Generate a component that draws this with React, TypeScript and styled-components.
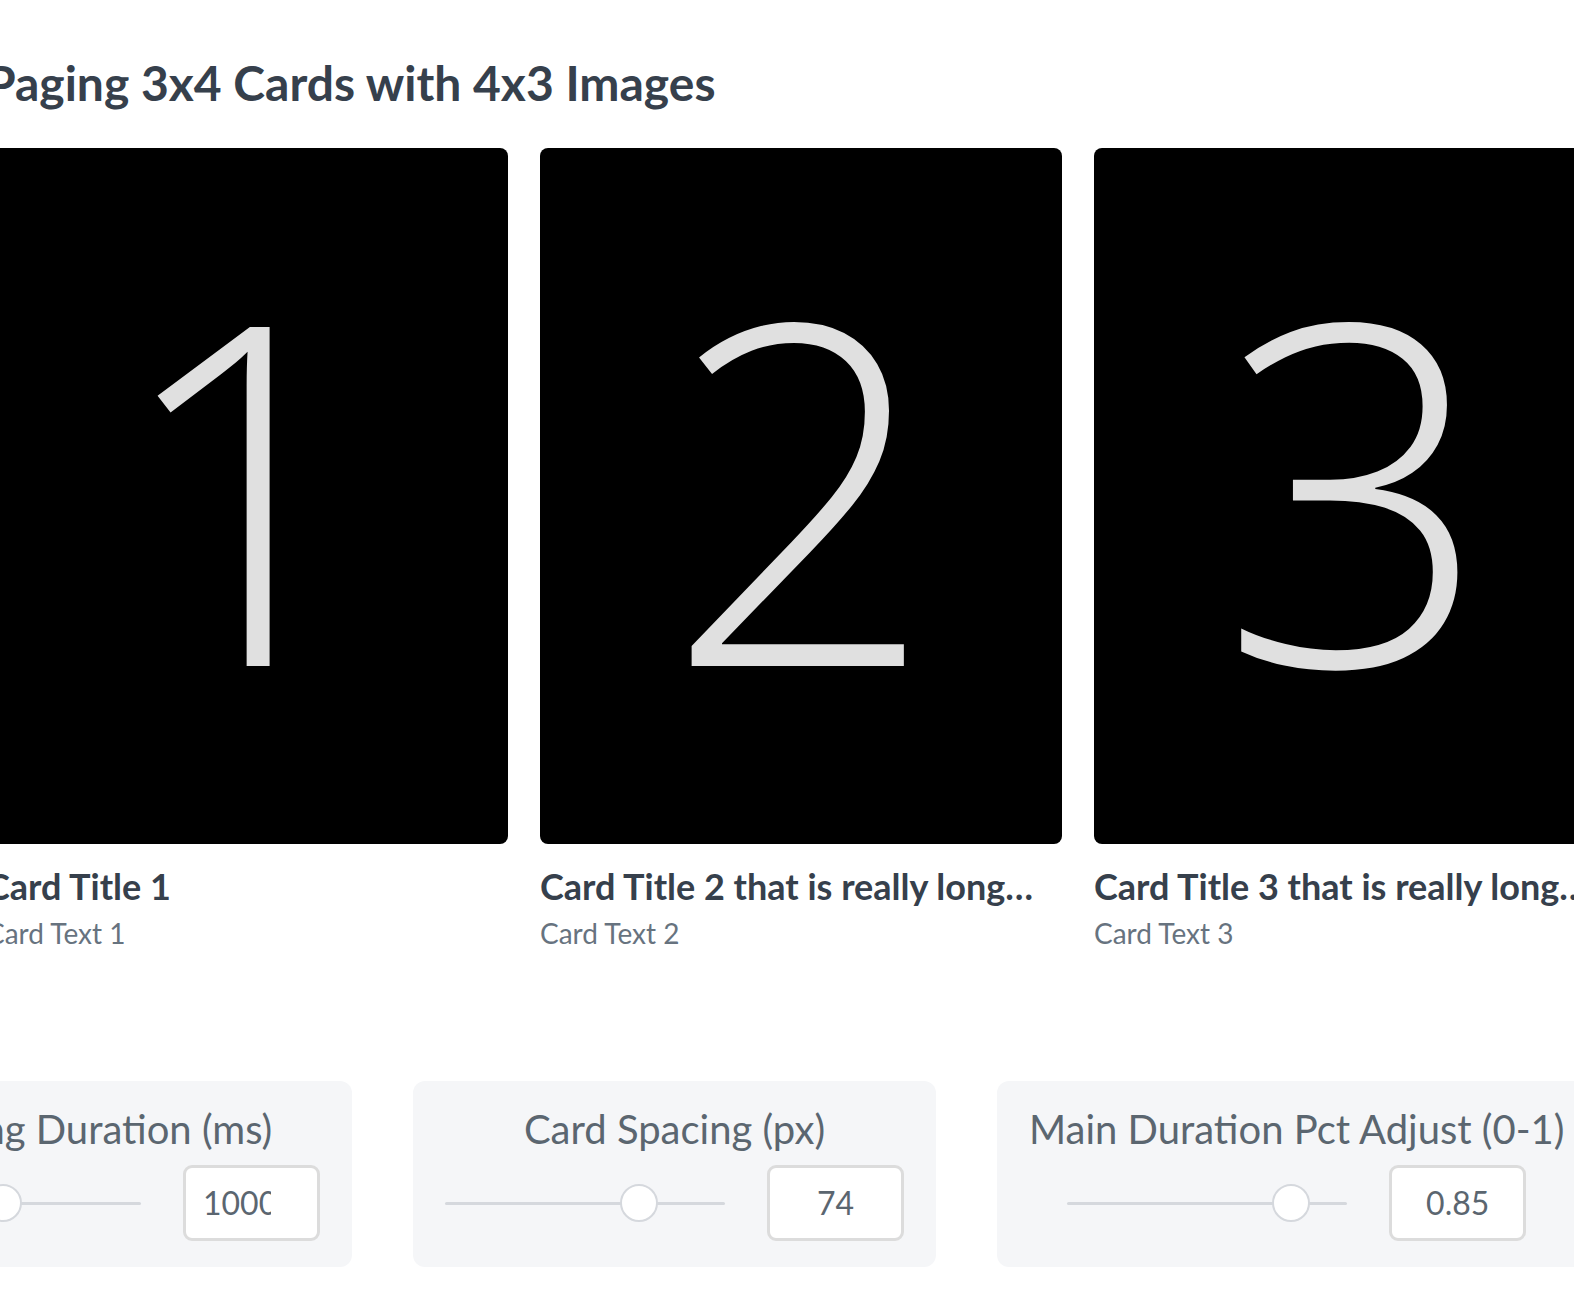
import React from "react";
import styled, { createGlobalStyle } from "styled-components";

const GlobalStyle = createGlobalStyle`
  html, body {
    margin: 0;
    padding: 0;
    background: #ffffff;
    overflow: hidden;
  }
  body {
    font-family: Lato, "Liberation Sans", sans-serif;
  }
`;

const Page = styled.div`
  width: 1574px;
  height: 1290px;
  overflow: hidden;
`;

const Inner = styled.div`
  margin-left: -14px;
  padding-top: 54px;
`;

const Heading = styled.h1`
  margin: 0;
  font-family: Lato, "Liberation Sans", sans-serif;
  font-weight: 700;
  font-size: 48px;
  line-height: 58px;
  color: #36404c;
  white-space: nowrap;
`;

const CardRow = styled.div`
  display: flex;
  gap: 32px;
  margin-top: 36px;
`;

const Card = styled.div`
  flex: 0 0 522px;
  width: 522px;
  min-width: 0;
`;

const CardImage = styled.div`
  height: 696px;
  background: #000000;
  border-radius: 8px;
  display: flex;
  align-items: center;
  justify-content: center;
  padding-bottom: 30px;
  box-sizing: border-box;
  overflow: hidden;
`;

const Digit = styled.span`
  font-family: "Open Sans", "Noto Sans", sans-serif;
  font-weight: 300;
  font-size: 475px;
  line-height: 1;
  color: #e0e0e0;
`;

const CardTitle = styled.div`
  margin-top: 20px;
  font-weight: 700;
  font-size: 36px;
  line-height: 44px;
  color: #36404c;
  white-space: nowrap;
  overflow: hidden;
`;

const CardText = styled.div`
  margin-top: 7px;
  font-weight: 400;
  font-size: 28px;
  line-height: 36px;
  color: #67737f;
  white-space: nowrap;
`;

const ControlsRow = styled.div`
  display: flex;
  gap: 61px;
  margin-top: 130px;
  margin-left: -157px;
`;

const Panel = styled.div`
  flex: 0 0 auto;
  background: #f5f6f8;
  border-radius: 12px;
  padding: 24px 32px 26px;
  display: flex;
  flex-direction: column;
  align-items: center;
`;

const PanelLabel = styled.div`
  font-size: 40px;
  line-height: 48px;
  color: #5b6670;
  white-space: nowrap;
`;

const ControlLine = styled.div`
  margin-top: 12px;
  display: flex;
  align-items: center;
  gap: 42px;
`;

const SliderTrack = styled.div`
  position: relative;
  width: 280px;
  height: 3px;
  background: #d5d8dd;
  border-radius: 2px;
`;

const SliderThumb = styled.div`
  position: absolute;
  top: 50%;
  width: 38px;
  height: 38px;
  box-sizing: border-box;
  border-radius: 50%;
  background: #ffffff;
  border: 2px solid #d5d8dd;
  transform: translate(-50%, -50%);
`;

const ValueBox = styled.div<{ $overflowing?: boolean }>`
  width: 137px;
  height: 76px;
  box-sizing: border-box;
  border: 3px solid #dcdcdc;
  border-radius: 9px;
  background: #ffffff;
  padding: ${(p) => (p.$overflowing ? "0 46px 0 17px" : "0 17px")};
  display: flex;
  align-items: center;
  justify-content: ${(p) => (p.$overflowing ? "flex-start" : "center")};
  overflow: hidden;
`;

const ValueText = styled.span`
  min-width: 0;
  font-size: 32px;
  line-height: 38px;
  color: #5b6670;
  white-space: nowrap;
  overflow: hidden;
`;

const cards = [
  { n: "1", title: "Card Title 1", text: "Card Text 1" },
  { n: "2", title: "Card Title 2 that is really long…", text: "Card Text 2" },
  { n: "3", title: "Card Title 3 that is really long…", text: "Card Text 3" },
];

const controls = [
  { label: "Paging Duration (ms)", value: "1000", pos: 0.507, overflowing: true },
  { label: "Card Spacing (px)", value: "74", pos: 0.693, overflowing: false },
  { label: "Main Duration Pct Adjust (0-1)", value: "0.85", pos: 0.8, overflowing: false },
];

export default function App() {
  return (
    <Page>
      <GlobalStyle />
      <Inner>
        <Heading>Paging 3x4 Cards with 4x3 Images</Heading>
        <CardRow>
          {cards.map((c) => (
            <Card key={c.n}>
              <CardImage>
                <Digit>{c.n}</Digit>
              </CardImage>
              <CardTitle>{c.title}</CardTitle>
              <CardText>{c.text}</CardText>
            </Card>
          ))}
        </CardRow>
        <ControlsRow>
          {controls.map((c) => (
            <Panel key={c.label}>
              <PanelLabel>{c.label}</PanelLabel>
              <ControlLine>
                <SliderTrack>
                  <SliderThumb style={{ left: `${c.pos * 100}%` }} />
                </SliderTrack>
                <ValueBox $overflowing={c.overflowing}>
                  <ValueText>{c.value}</ValueText>
                </ValueBox>
              </ControlLine>
            </Panel>
          ))}
        </ControlsRow>
      </Inner>
    </Page>
  );
}
